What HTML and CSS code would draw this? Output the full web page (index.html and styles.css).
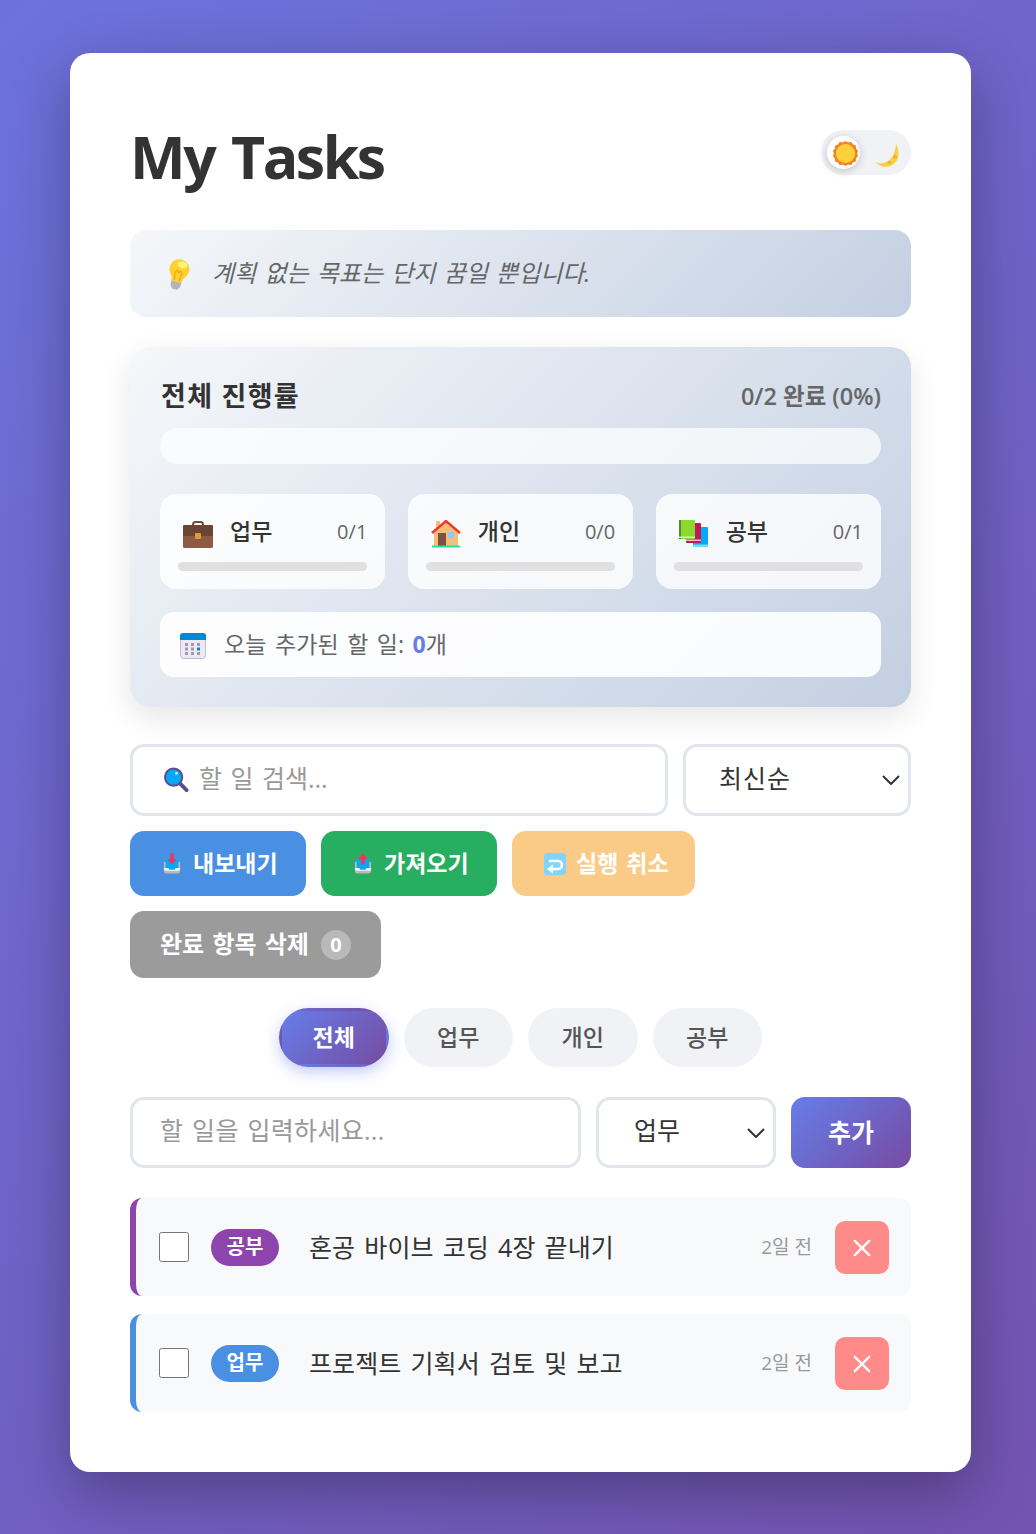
FILE: index.html
```html
<!DOCTYPE html>
<html lang="ko">
<head>
<meta charset="utf-8">
<title>My Tasks</title>
<link rel="stylesheet" href="styles.css">
</head>
<body>
<main class="container">
  <header class="top">
    <h1 class="title">My Tasks</h1>
    <div class="toggle">
      <span class="knob"></span>
      <svg class="sun" viewBox="0 0 24 24"><path fill="#f58220" d="M12 0l2.600 1.400 2.900-.6 1.600 2.500 2.800 1 .2 3 2 2.200-1 2.500 1 2.500-2 2.200-.2 3-2.800 1-1.600 2.500-2.900-.6L12 24l-2.600-1.400-2.900.6-1.600-2.500-2.800-1-.2-3-2-2.200 1-2.500-1-2.500 2-2.200.2-3 2.800-1 1.600-2.500 2.900.6z"/><circle cx="12" cy="12" r="9.200" fill="#ffd03b"/></svg>
      <svg class="moon" viewBox="0 0 24 24"><path fill="#f9d03f" d="M20 0c4 7 3.500 16-3 20.500C11.500 24 4.500 23.500 0 18.500c5.500 1.500 10.500.5 14.500-3.500C18 11 19.500 6 20 0z"/><circle cx="19" cy="13" r="2" fill="#eeb23a"/><circle cx="13.500" cy="18.500" r="1.600" fill="#eeb23a"/></svg>
    </div>
  </header>

  <section class="tip">
    <svg class="tip-icon" viewBox="0 0 24 32"><g transform="rotate(14 12 16)"><path fill="#fdd12f" d="M12 0a10 10 0 0 1 10 10c0 4.500-3 6.500-4.500 10v3h-11v-3C5 16.500 2 14.500 2 10A10 10 0 0 1 12 0z"/><ellipse cx="14" cy="5" rx="5" ry="3.500" fill="#fff176"/><path fill="none" stroke="#f6a821" stroke-width="1.400" d="M9.500 22l-1-8 2-2.500 1.500 2 1.500-2 2 2.500-1 8"/><path fill="#b4b4b4" d="M7 23h10v4l-2.500 3.500h-5L7 27z"/></g></svg>
    <p class="tip-text">계획 없는 목표는 단지 꿈일 뿐입니다.</p>
  </section>

  <section class="progress">
    <div class="progress-head">
      <h2 class="progress-title">전체 진행률</h2>
      <span class="progress-count">0/2 완료 (0%)</span>
    </div>
    <div class="bar"></div>
    <div class="cats">
      <div class="cat">
        <div class="cat-row">
          <svg class="cat-icon" viewBox="0 0 30 28"><path fill="none" stroke="#6d4c41" stroke-width="2" d="M10 7V4.500C10 3 11 2 12.500 2h5C19 2 20 3 20 4.500V7"/><rect y="5" width="30" height="23" rx="1.500" fill="#8d5a44"/><path fill="#6b4433" d="M0 6.500C0 5.500.7 5 1.500 5h27c.8 0 1.500.5 1.500 1.500V16H0z"/><rect x="12" y="13" width="6" height="6" rx="1" fill="#e09a3a"/></svg>
          <span class="cat-name">업무</span>
          <span class="cat-count">0/1</span>
        </div>
        <div class="cat-bar"></div>
      </div>
      <div class="cat">
        <div class="cat-row">
          <svg class="cat-icon" viewBox="0 0 30 28"><path fill="#f3c079" d="M5 1h4v6L5 11z"/><path fill="#f3c079" d="M3 12L15 1l12 11v14H3z"/><path fill="none" stroke="#f4352c" stroke-width="2.400" d="M1 13L15 1l14 12"/><rect x="7" y="13" width="8" height="13" fill="#7e5142"/><rect x="17" y="12" width="6" height="6" fill="#90caf9"/><rect x="1" y="25.500" width="28" height="2" fill="#1de9a0"/></svg>
          <span class="cat-name">개인</span>
          <span class="cat-count">0/0</span>
        </div>
        <div class="cat-bar"></div>
      </div>
      <div class="cat">
        <div class="cat-row">
          <svg class="cat-icon" viewBox="0 0 30 28"><rect x="14" y="7" width="15" height="20" rx="1" fill="#03a9f4"/><rect x="14" y="24.500" width="15" height="2.500" fill="#81d4fa"/><rect x="7" y="3" width="15" height="20" rx="1" fill="#c2185b"/><rect x="7" y="19.500" width="15" height="1.500" fill="#f8bbd0"/><rect x="0" y="0" width="16" height="19" rx="1" fill="#8bd92c"/><rect x="0" y="0" width="2" height="19" fill="#558b2f"/><rect x="0" y="16.500" width="16" height="1.500" fill="#dcedc8"/></svg>
          <span class="cat-name">공부</span>
          <span class="cat-count">0/1</span>
        </div>
        <div class="cat-bar"></div>
      </div>
    </div>
    <div class="today">
      <svg class="today-icon" viewBox="0 0 26 26"><rect x=".5" y=".5" width="25" height="25" rx="3" fill="#ede7f6" stroke="#c5b9d4"/><path fill="#0288d1" d="M0 7V3a3 3 0 0 1 3-3h20a3 3 0 0 1 3 3v4z"/><g fill="#a09aaa"><rect x="5" y="10" width="3" height="3"/><rect x="11" y="10" width="3" height="3"/><rect x="17" y="10" width="3" height="3"/><rect x="5" y="14.500" width="3" height="3"/><rect x="11" y="14.500" width="3" height="3"/><rect x="5" y="19" width="3" height="3"/><rect x="11" y="19" width="3" height="3"/><rect x="17" y="19" width="3" height="3"/></g><rect x="17" y="14.500" width="3" height="3" fill="#0288d1"/></svg>
      <span class="today-text">오늘 추가된 할 일: <b class="today-num">0</b>개</span>
    </div>
  </section>

  <div class="search-row">
    <div class="search">
      <svg class="search-icon" viewBox="0 0 26 26"><path stroke="#5c4b91" stroke-width="4" stroke-linecap="round" d="M16 16l7.500 7.500"/><circle cx="10" cy="10" r="9" fill="#03a9f4" stroke="#5c4b91" stroke-width="2"/><circle cx="13" cy="6" r="1.300" fill="#fff"/></svg>
      <input class="field search-input" type="text" placeholder="할 일 검색...">
    </div>
    <div class="select-wrap sort-wrap">
      <select class="field select sort"><option>최신순</option></select>
      <svg class="chev" viewBox="0 0 18 10"><path fill="none" stroke="#333" stroke-width="2" d="M1 1l8 8 8-8"/></svg>
    </div>
  </div>

  <div class="actions">
    <button class="btn btn-blue" type="button">
      <svg class="btn-icon" viewBox="0 0 20 22"><path fill="#b9b9b9" d="M1 9h18v10a3 3 0 0 1-3 3H4a3 3 0 0 1-3-3z"/><path fill="#03a9f4" d="M3 7h14v9a2 2 0 0 1-2 2H5a2 2 0 0 1-2-2z"/><path fill="#f4f4f4" d="M1 16h5l1 2h6l1-2h5v1a2 2 0 0 1-2 2H3a2 2 0 0 1-2-2z"/><path fill="#f0325f" d="M8 0h4v6h3l-5 6-5-6h3z"/></svg>
      <span>내보내기</span>
    </button>
    <button class="btn btn-green" type="button">
      <svg class="btn-icon" viewBox="0 0 20 22"><path fill="#b9b9b9" d="M1 9h18v10a3 3 0 0 1-3 3H4a3 3 0 0 1-3-3z"/><path fill="#03a9f4" d="M3 7h14v9a2 2 0 0 1-2 2H5a2 2 0 0 1-2-2z"/><path fill="#f4f4f4" d="M1 16h5l1 2h6l1-2h5v1a2 2 0 0 1-2 2H3a2 2 0 0 1-2-2z"/><path fill="#f0325f" d="M10 0l5 6h-3v6H8V6H5z"/></svg>
      <span>가져오기</span>
    </button>
    <button class="btn btn-orange" type="button">
      <svg class="btn-icon undo" viewBox="0 0 22 22"><rect width="22" height="22" rx="3" fill="#81d4fa"/><path fill="none" stroke="#fff" stroke-width="2.600" d="M8 16h6a4 4 0 0 0 0-8H5"/><path fill="#fff" d="M3 16l6-4.500v9z"/></svg>
      <span>실행 취소</span>
    </button>
    <button class="btn btn-gray" type="button">
      <span>완료 항목 삭제</span>
      <span class="btn-badge">0</span>
    </button>
  </div>

  <nav class="filters">
    <button class="pill pill-active" type="button">전체</button>
    <button class="pill" type="button">업무</button>
    <button class="pill" type="button">개인</button>
    <button class="pill" type="button">공부</button>
  </nav>

  <div class="add-row">
    <input class="field add-input" type="text" placeholder="할 일을 입력하세요...">
    <div class="select-wrap add-wrap">
      <select class="field select add-cat"><option>업무</option></select>
      <svg class="chev" viewBox="0 0 18 10"><path fill="none" stroke="#333" stroke-width="2" d="M1 1l8 8 8-8"/></svg>
    </div>
    <button class="add-btn" type="button">추가</button>
  </div>

  <ul class="list">
    <li class="item item-study">
      <input class="check" type="checkbox">
      <span class="badge badge-study">공부</span>
      <span class="item-text">혼공 바이브 코딩 4장 끝내기</span>
      <span class="item-time">2일 전</span>
      <button class="del" type="button" aria-label="삭제"><svg viewBox="0 0 20 20"><path stroke="#fff" stroke-width="2.600" stroke-linecap="round" d="M2 2l16 16M18 2L2 18"/></svg></button>
    </li>
    <li class="item item-work">
      <input class="check" type="checkbox">
      <span class="badge badge-work">업무</span>
      <span class="item-text">프로젝트 기획서 검토 및 보고</span>
      <span class="item-time">2일 전</span>
      <button class="del" type="button" aria-label="삭제"><svg viewBox="0 0 20 20"><path stroke="#fff" stroke-width="2.600" stroke-linecap="round" d="M2 2l16 16M18 2L2 18"/></svg></button>
    </li>
  </ul>
</main>
</body>
</html>
```

FILE: styles.css
```css
* { box-sizing: border-box; }
html, body { margin: 0; }
body {
  min-height: 1534px;
  padding: 53px 65px 62px 70px;
  background: linear-gradient(135deg, #6c72dc 0%, #7353b0 100%);
  font-family: "Open Sans", "Noto Sans CJK KR", sans-serif;
  color: #333;
}
button, input, select { font-family: inherit; }
.container {
  background: #fff;
  border-radius: 20px;
  padding: 60px;
  box-shadow: 0 20px 60px rgba(0, 0, 0, .3);
}
.top { display: flex; justify-content: space-between; align-items: flex-start; height: 117px; }
.title { margin: 5px 0 0; font-size: 59px; line-height: 76px; font-weight: 700; letter-spacing: -2.500px; word-spacing: 4px; color: #333; }
.toggle { position: relative; width: 90px; height: 45px; margin-top: 17px; border-radius: 23px; background: #f0f2f5; }
.knob { position: absolute; left: 6px; top: 6px; width: 33px; height: 33px; border-radius: 50%; background: #fff; box-shadow: 0 2px 8px rgba(0, 0, 0, .2); }
.sun { position: absolute; left: 12px; top: 11px; width: 25px; height: 25px; }
.moon { position: absolute; left: 55px; top: 14px; width: 24px; height: 24px; }

.tip { display: flex; align-items: center; height: 87px; padding: 0 36px; border-radius: 16px; background: linear-gradient(135deg, #f5f7fa 0%, #c3cfe2 100%); }
.tip-icon { width: 24px; height: 32px; flex: none; margin-right: 22px; margin-top: 3px; }
.tip-text { margin: 0 0 4px; font-size: 24px; font-style: italic; color: #666; word-spacing: 2px; }

.progress { margin-top: 30px; padding: 30px; height: 360px; border-radius: 20px; background: linear-gradient(135deg, #f5f7fa 0%, #c3cfe2 100%); box-shadow: 0 10px 30px rgba(0, 0, 0, .1); }
.progress-head { display: flex; justify-content: space-between; align-items: center; height: 36px; }
.progress-title { margin: 0 0 2px 1px; font-size: 27px; font-weight: 700; color: #333; letter-spacing: 1.300px; }
.progress-count { margin-bottom: 1px; font-size: 23.500px; font-weight: 600; color: #666; }
.bar { height: 36px; margin-top: 15px; border-radius: 18px; background: rgba(255, 255, 255, .7); }
.cats { display: grid; grid-template-columns: repeat(3, 1fr); gap: 22.5px; margin-top: 30px; }
.cat { height: 95px; padding: 18px 18px 0; border-radius: 16px; background: rgba(255, 255, 255, .8); }
.cat-row { display: flex; align-items: center; height: 40px; padding-left: 5px; }
.cat-icon { width: 30px; height: 28px; flex: none; margin-right: 17px; margin-top: 3px; }
.cat-name { margin-bottom: 4px; font-size: 23px; font-weight: 500; color: #333; }
.cat-count { margin-left: auto; margin-bottom: 2px; font-size: 20px; color: #666; }
.cat-bar { height: 9px; margin-top: 10px; border-radius: 5px; background: #e0e0e0; }
.today { display: flex; align-items: center; height: 65px; margin-top: 23px; padding: 0 20px; border-radius: 14px; background: rgba(255, 255, 255, .9); }
.today-icon { width: 26px; height: 26px; flex: none; margin-right: 18px; margin-top: 2px; }
.today-text { margin-bottom: 4px; font-size: 23px; color: #666; word-spacing: 2px; letter-spacing: .2px; }
.today-num { color: #667eea; font-weight: 700; }

.search-row { display: flex; gap: 15px; margin-top: 37px; }
.search { position: relative; flex: 1; }
.search-icon { position: absolute; left: 34px; top: 23px; width: 25px; height: 26px; }
.field { height: 72px; border: 3px solid #e0e5ee; border-radius: 14px; background: #fff; color: #333; font-size: 25px; padding-bottom: 5px; }
.field::placeholder { color: #999; }
.search-input { width: 100%; padding: 0 20px 5px 66px; word-spacing: 2px; }
.select-wrap { position: relative; flex: none; }
.select { width: 100%; appearance: none; }
.chev { position: absolute; top: 31px; width: 18px; height: 10px; pointer-events: none; }
.sort-wrap { width: 228px; }
.sort-wrap .chev { right: 11px; }
.sort { padding-left: 33px; letter-spacing: 1px; }

.actions { display: flex; flex-wrap: wrap; gap: 15px; margin-top: 15px; }
.btn { display: flex; align-items: center; width: 176px; height: 65px; padding: 0 0 0 33px; border: 0; border-radius: 14px; color: #fff; font-size: 23px; font-weight: 700; }
.btn > span:first-of-type { margin-bottom: 4px; }
.btn-icon { width: 18px; height: 21px; margin-right: 12px; }
.undo { width: 22px; height: 22px; margin-right: 10px; }
.btn-blue { background: #4a90e2; }
.btn-green { background: #27ae60; }
.btn-orange { width: 183px; background: #f9cb87; padding-left: 32px; word-spacing: 2px; }
.btn-gray { width: 251px; height: 67px; background: #9b9b9b; padding-left: 30px; font-size: 24px; word-spacing: 2px; }
.btn-badge { display: flex; align-items: center; justify-content: center; width: 30px; height: 30px; margin-left: 12px; border-radius: 50%; background: rgba(255, 255, 255, .3); font-size: 20px; }

.filters { display: flex; justify-content: center; gap: 15px; margin-top: 30px; }
.pill { width: 109.5px; height: 59px; padding: 0 0 4px; border: 3px solid transparent; border-radius: 30px; background: #f0f2f5; color: #555; font-size: 23px; font-weight: 500; }
.pill-active { background: linear-gradient(135deg, #667eea 0%, #764ba2 100%); color: #fff; font-weight: 700; box-shadow: 0 5px 15px rgba(102, 126, 234, .4); }

.add-row { display: flex; gap: 15px; margin-top: 30px; }
.add-input { flex: 1; min-width: 0; height: 71px; padding: 0 27px 5px; word-spacing: 2px; letter-spacing: .3px; }
.add-wrap { width: 180px; }
.add-wrap .chev { right: 11px; }
.add-cat { height: 71px; padding-left: 35px; }
.add-btn { width: 120px; height: 71px; padding: 0 0 3px; border: 0; border-radius: 14px; background: linear-gradient(135deg, #667eea 0%, #764ba2 100%); color: #fff; font-size: 25px; font-weight: 700; }

.list { list-style: none; margin: 30px 0 0; padding: 0; display: flex; flex-direction: column; gap: 18px; }
.item { display: flex; align-items: center; height: 98px; padding: 0 22px 0 23px; border-left: 6px solid; border-radius: 12px; background: #f8f9fa; }
.item-study { border-color: #8e44ad; }
.item-work { border-color: #4a90e2; }
.check { width: 30px; height: 30px; margin: 0 22px 0 0; flex: none; }
.badge { display: flex; align-items: center; justify-content: center; width: 68px; height: 37px; margin-right: 30px; padding-bottom: 3px; border-radius: 19px; color: #fff; font-size: 20px; font-weight: 700; flex: none; }
.badge-study { background: #8e44ad; }
.badge-work { background: #4a90e2; }
.item-text { flex: 1; margin-bottom: 3px; font-size: 25px; color: #333; word-spacing: 2.500px; letter-spacing: .1px; }
.item-time { margin-right: 23px; margin-bottom: 3px; font-size: 19px; color: #999; }
.del { display: flex; align-items: center; justify-content: center; width: 54px; height: 53px; padding: 2px 0 0; border: 0; border-radius: 10px; background: #ff8a8a; }
.del svg { width: 18px; height: 18px; }
```
